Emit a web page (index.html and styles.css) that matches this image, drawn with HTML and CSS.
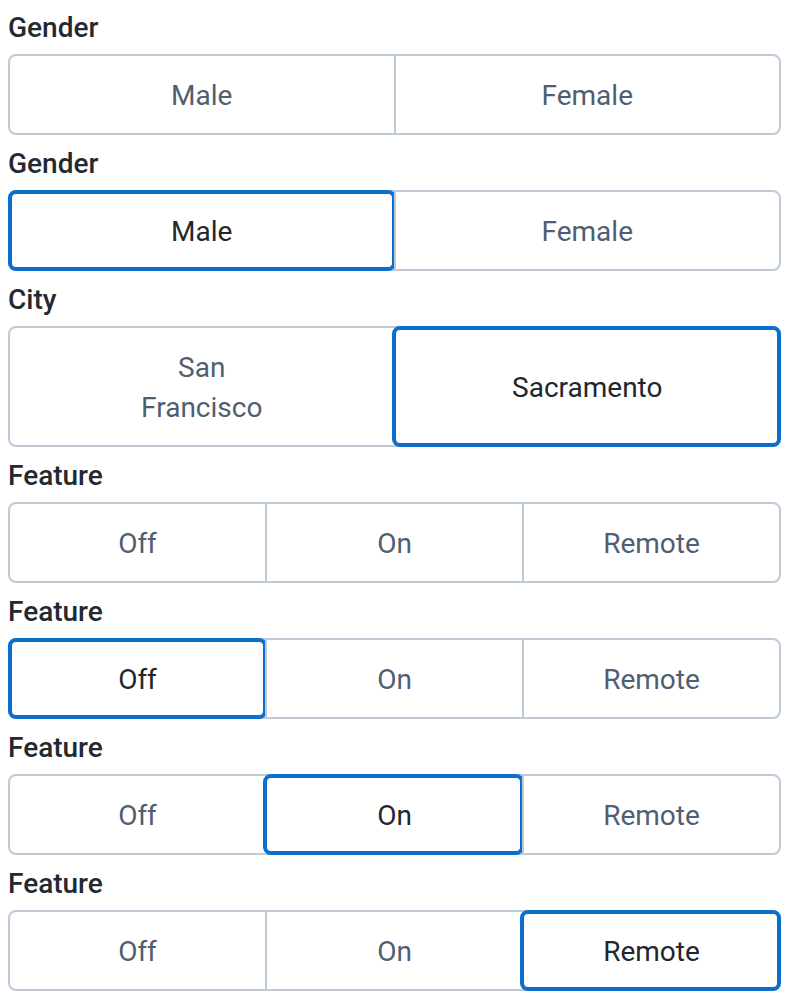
FILE: index.html
```html
<!DOCTYPE html>
<html>
<head>
<meta charset="utf-8">
<link rel="stylesheet" href="styles.css">
</head>
<body>
<div class="stack">
  <div class="group">
    <div class="label">Gender</div>
    <div class="seg">
      <div class="opt">Male</div>
      <div class="opt">Female</div>
    </div>
  </div>
  <div class="group">
    <div class="label">Gender</div>
    <div class="seg">
      <div class="opt sel">Male</div>
      <div class="opt">Female</div>
    </div>
  </div>
  <div class="group">
    <div class="label">City</div>
    <div class="seg">
      <div class="opt">San<br>Francisco</div>
      <div class="opt sel">Sacramento</div>
    </div>
  </div>
  <div class="group">
    <div class="label">Feature</div>
    <div class="seg">
      <div class="opt">Off</div>
      <div class="opt">On</div>
      <div class="opt">Remote</div>
    </div>
  </div>
  <div class="group">
    <div class="label">Feature</div>
    <div class="seg">
      <div class="opt sel">Off</div>
      <div class="opt">On</div>
      <div class="opt">Remote</div>
    </div>
  </div>
  <div class="group">
    <div class="label">Feature</div>
    <div class="seg">
      <div class="opt">Off</div>
      <div class="opt sel">On</div>
      <div class="opt">Remote</div>
    </div>
  </div>
  <div class="group">
    <div class="label">Feature</div>
    <div class="seg">
      <div class="opt">Off</div>
      <div class="opt">On</div>
      <div class="opt sel">Remote</div>
    </div>
  </div>
</div>
</body>
</html>
```

FILE: styles.css
```css
html, body {
  margin: 0;
  padding: 0;
  background: #ffffff;
}
body {
  padding: 8px 8px 0 8px;
  font-family: Roboto, "Liberation Sans", sans-serif;
}
.stack {
  display: flex;
  flex-direction: column;
  gap: 9px;
}
.group {
  display: flex;
  flex-direction: column;
  gap: 6px;
}
.label {
  font-size: 28px;
  font-weight: 500;
  line-height: 40px;
  color: #24292f;
}
.seg {
  display: flex;
  border: 2px solid #bfcad7;
  border-radius: 8px;
  background: #fff;
}
.opt {
  flex: 1 1 0;
  min-width: 0;
  text-align: center;
  font-size: 28px;
  line-height: 40px;
  padding: 20px 8px 17px;
  color: #4f5e71;
  display: flex;
  align-items: center;
  justify-content: center;
}
.opt + .opt {
  border-left: 2px solid #bfcad7;
}
.opt.sel {
  color: #22272e;
  border-radius: 6px;
  border-left-color: transparent;
  outline: 4px solid #0a70cc;
  outline-offset: -2px;
}
```
